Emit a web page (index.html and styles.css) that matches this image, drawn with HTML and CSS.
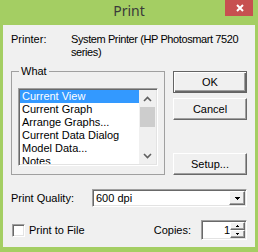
FILE: index.html
```html
<!DOCTYPE html>
<html lang="en">
<head>
  <meta charset="UTF-8">
  <title>Print</title>
  <link rel="stylesheet" href="styles.css">
</head>
<body>
  <div class="window">
    <div class="titlebar">
      <span class="title">Print</span>
      <button class="close-btn">
        <svg width="8" height="8" viewBox="0 0 8 8"><path d="M1 1L7 7M7 1L1 7" stroke="#fff" stroke-width="2"/></svg>
      </button>
    </div>

    <div class="panel">
      <div class="printer-row">
        <span>Printer:</span>
        <span class="printer-name">System Printer (HP Photosmart 7520 series)</span>
      </div>

      <div class="main">
        <fieldset class="group">
          <legend>What</legend>
          <div class="listbox">
            <ul class="items">
              <li class="selected">Current View</li>
              <li>Current Graph</li>
              <li>Arrange Graphs...</li>
              <li>Current Data Dialog</li>
              <li>Model Data...</li>
              <li>Notes</li>
            </ul>
            <div class="scrollbar">
              <span class="arrow">
                <svg width="9" height="6" viewBox="0 0 9 6"><path d="M1 5L4.5 1.5L8 5" fill="none" stroke="#606060" stroke-width="1.6"/></svg>
              </span>
              <span class="thumb"></span>
              <span class="track"></span>
              <span class="arrow">
                <svg width="9" height="6" viewBox="0 0 9 6"><path d="M1 1L4.5 4.5L8 1" fill="none" stroke="#606060" stroke-width="1.6"/></svg>
              </span>
            </div>
          </div>
        </fieldset>

        <div class="buttons">
          <button class="btn default">OK</button>
          <button class="btn">Cancel</button>
          <button class="btn setup">Setup...</button>
        </div>
      </div>

      <div class="quality-row">
        <span class="quality-label">Print Quality:</span>
        <div class="combo">
          <span class="combo-value">600 dpi</span>
          <span class="drop-btn">
            <svg width="5" height="3" viewBox="0 0 5 3"><path d="M0 0h5v1H0zM1 1h3v1H1zM2 2h1v1H2z" fill="#000"/></svg>
          </span>
        </div>
      </div>

      <div class="bottom-row">
        <label class="check"><span class="checkbox"></span>Print to File</label>
        <span class="copies-label">Copies:</span>
        <div class="spin">
          <span class="spin-value">1</span>
          <span class="spin-btns">
            <span class="spin-btn">
              <svg width="3" height="2" viewBox="0 0 3 2"><path d="M1 0h1v1H1zM0 1h3v1H0z" fill="#000"/></svg>
            </span>
            <span class="spin-btn">
              <svg width="3" height="2" viewBox="0 0 3 2"><path d="M0 0h3v1H0zM1 1h1v1H1z" fill="#000"/></svg>
            </span>
          </span>
        </div>
      </div>
    </div>
  </div>
</body>
</html>
```

FILE: styles.css
```css
body {
  margin: 0;
  background: #a4ce63;
  font-family: "Liberation Sans", Arial, sans-serif;
  font-size: 11px;
  color: #000;
}
.window {
  width: 258px;
  height: 252px;
  padding: 0 3px 5px;
  box-sizing: border-box;
  display: flex;
  flex-direction: column;
}
.titlebar {
  height: 25px;
  display: grid;
  grid-template-columns: 1fr auto 1fr;
  align-items: start;
}
.title {
  grid-column: 2;
  padding-top: 1px;
  font: 14px/19px "Noto Sans", sans-serif;
  color: #3a3a3a;
}
.close-btn {
  grid-column: 3;
  justify-self: end;
  width: 28px;
  height: 16px;
  margin-right: 2px;
  padding: 0 0 0 2px;
  border: none;
  background: #c75050;
  display: flex;
  align-items: center;
  justify-content: center;
}
.panel {
  flex: 1;
  background: #f0f0f0;
  padding: 8px 8px 7px;
  display: flex;
  flex-direction: column;
}
.printer-row {
  display: grid;
  grid-template-columns: 60px 1fr;
  line-height: 13px;
}
.printer-name {
  letter-spacing: -0.4px;
}
.main {
  display: grid;
  grid-template-columns: 154px 74px;
  column-gap: 8px;
  margin-top: 6px;
  height: 110px;
}
.group {
  margin: 0;
  padding: 10px 6px 0;
  min-width: 0;
  border: 1px solid #a0a0a0;
}
.group legend {
  padding: 0 2px;
  margin-left: 1px;
  line-height: 13px;
}
.listbox {
  display: flex;
  height: 78px;
  box-sizing: border-box;
  padding: 1px;
  border: 1px solid;
  border-color: #a0a0a0 #fff #fff #a0a0a0;
  box-shadow: inset 1px 1px 0 #696969, inset -1px -1px 0 #e3e3e3;
}
.items {
  flex: 1;
  margin: 0;
  padding: 0;
  list-style: none;
  background: #fff;
  overflow: hidden;
}
.items li {
  height: 13px;
  line-height: 13px;
  padding-left: 2px;
  white-space: nowrap;
}
.items li.selected {
  background: #3399ff;
  color: #fff;
}
.scrollbar {
  width: 17px;
  background: #f0f0f0;
  display: flex;
  flex-direction: column;
}
.arrow {
  height: 17px;
  display: flex;
  align-items: center;
  justify-content: center;
}
.thumb {
  height: 20px;
  margin: 0 1px;
  background: #cdcdcd;
}
.track {
  flex: 1;
}
.buttons {
  display: flex;
  flex-direction: column;
  gap: 5px;
  padding-top: 6px;
}
.btn {
  height: 22px;
  padding: 0;
  font: 11px "Liberation Sans", Arial, sans-serif;
  color: #000;
  background: #f0f0f0;
  border: 1px solid;
  border-color: #fff #696969 #696969 #fff;
  box-shadow: inset -1px -1px 0 #a0a0a0;
}
.btn.default {
  border-color: #646464;
  box-shadow: inset 1px 1px 0 #fff, inset -1px -1px 0 #696969, inset -2px -2px 0 #a0a0a0;
}
.btn.setup {
  margin-top: auto;
}
.quality-row {
  display: flex;
  align-items: center;
  margin-top: 14px;
  height: 18px;
}
.quality-label {
  width: 81px;
}
.combo, .spin {
  display: flex;
  box-sizing: border-box;
  padding: 1px;
  background: #fff;
  border: 1px solid;
  border-color: #a0a0a0 #fff #fff #a0a0a0;
  box-shadow: inset 1px 1px 0 #696969, inset -1px -1px 0 #e3e3e3;
}
.combo {
  flex: 1;
  height: 18px;
}
.combo-value {
  flex: 1;
  padding-left: 2px;
  line-height: 14px;
}
.drop-btn, .spin-btn {
  display: flex;
  align-items: center;
  justify-content: center;
  box-sizing: border-box;
  background: #f0f0f0;
  border: 1px solid;
  border-color: #fff #696969 #696969 #fff;
  box-shadow: inset -1px -1px 0 #a0a0a0;
}
.drop-btn {
  width: 16px;
}
.bottom-row {
  display: flex;
  align-items: center;
  margin-top: 13px;
  height: 20px;
}
.check {
  display: flex;
  align-items: center;
  gap: 4px;
}
.checkbox {
  width: 13px;
  height: 13px;
  margin-left: 1px;
  box-sizing: border-box;
  background: #fff;
  border: 1px solid;
  border-color: #a0a0a0 #fff #fff #a0a0a0;
  box-shadow: inset 1px 1px 0 #696969, inset -1px -1px 0 #e3e3e3;
}
.copies-label {
  margin-left: auto;
  margin-right: 10px;
}
.spin {
  width: 46px;
  height: 20px;
}
.spin-value {
  flex: 1;
  text-align: right;
  line-height: 16px;
}
.spin-btns {
  width: 15px;
  display: flex;
  flex-direction: column;
}
.spin-btn {
  flex: 1;
}
```
